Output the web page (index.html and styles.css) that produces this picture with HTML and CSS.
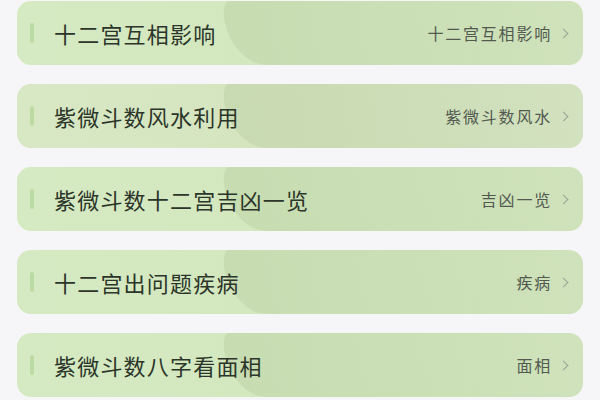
FILE: index.html
```html
<!DOCTYPE html>
<html lang="zh">
<head>
<meta charset="utf-8">
<link rel="stylesheet" href="styles.css">
</head>
<body>
<div class="list">
  <div class="card"><span class="bar"></span><span class="title">十二宫互相影响</span><span class="tag">十二宫互相影响</span><span class="chev"></span></div>
  <div class="card alt"><span class="bar"></span><span class="title">紫微斗数风水利用</span><span class="tag">紫微斗数风水</span><span class="chev"></span></div>
  <div class="card"><span class="bar"></span><span class="title">紫微斗数十二宫吉凶一览</span><span class="tag">吉凶一览</span><span class="chev"></span></div>
  <div class="card"><span class="bar"></span><span class="title">十二宫出问题疾病</span><span class="tag">疾病</span><span class="chev"></span></div>
  <div class="card"><span class="bar"></span><span class="title">紫微斗数八字看面相</span><span class="tag">面相</span><span class="chev"></span></div>
</div>
</body>
</html>
```
FILE: styles.css
```css
html, body {
  margin: 0;
  padding: 0;
  background: #f6f6f8;
  font-family: "Noto Sans CJK SC", "Noto Sans", sans-serif;
}
.list {
  display: flex;
  flex-direction: column;
  gap: 19px;
  padding: 1px 17px 0 17px;
}
.card {
  position: relative;
  overflow: hidden;
  height: 64px;
  border-radius: 14px;
  background: linear-gradient(90deg, #d5eac2 0%, #d3e8bf 40%, #d2e5bf 100%);
  display: flex;
  align-items: center;
  padding: 0 14px 0 13px;
  box-sizing: border-box;
}
.card.alt {
  background: linear-gradient(90deg, #d8e8c4 0%, #d5e5c0 40%, #d6e4c3 100%);
}
.card::before {
  content: "";
  position: absolute;
  left: 204px;
  top: 0;
  bottom: 0;
  right: -60px;
  border-top-left-radius: 8px 20px;
  border-bottom-left-radius: 34px 44px;
  transform-origin: top left;
  transform: skewX(10deg);
  background: linear-gradient(90deg, rgba(150,175,120,0.2) 0%, rgba(150,175,120,0.13) 45%, rgba(150,175,120,0.02) 100%);
}
.bar {
  position: relative;
  width: 4px;
  height: 20px;
  border-radius: 2px;
  background: #bddaa2;
  margin-right: 20px;
}
.title {
  position: relative;
  font-size: 22px;
  color: #2c3529;
  letter-spacing: 1.2px;
  flex: 1;
}
.tag {
  position: relative;
  font-size: 16px;
  color: #525a50;
  letter-spacing: 1.8px;
}
.chev {
  position: relative;
  width: 6px;
  height: 6px;
  border-top: 1.6px solid #9aa296;
  border-right: 1.6px solid #9aa296;
  transform: rotate(45deg);
  margin-left: 8px;
  margin-right: 2px;
}
```
